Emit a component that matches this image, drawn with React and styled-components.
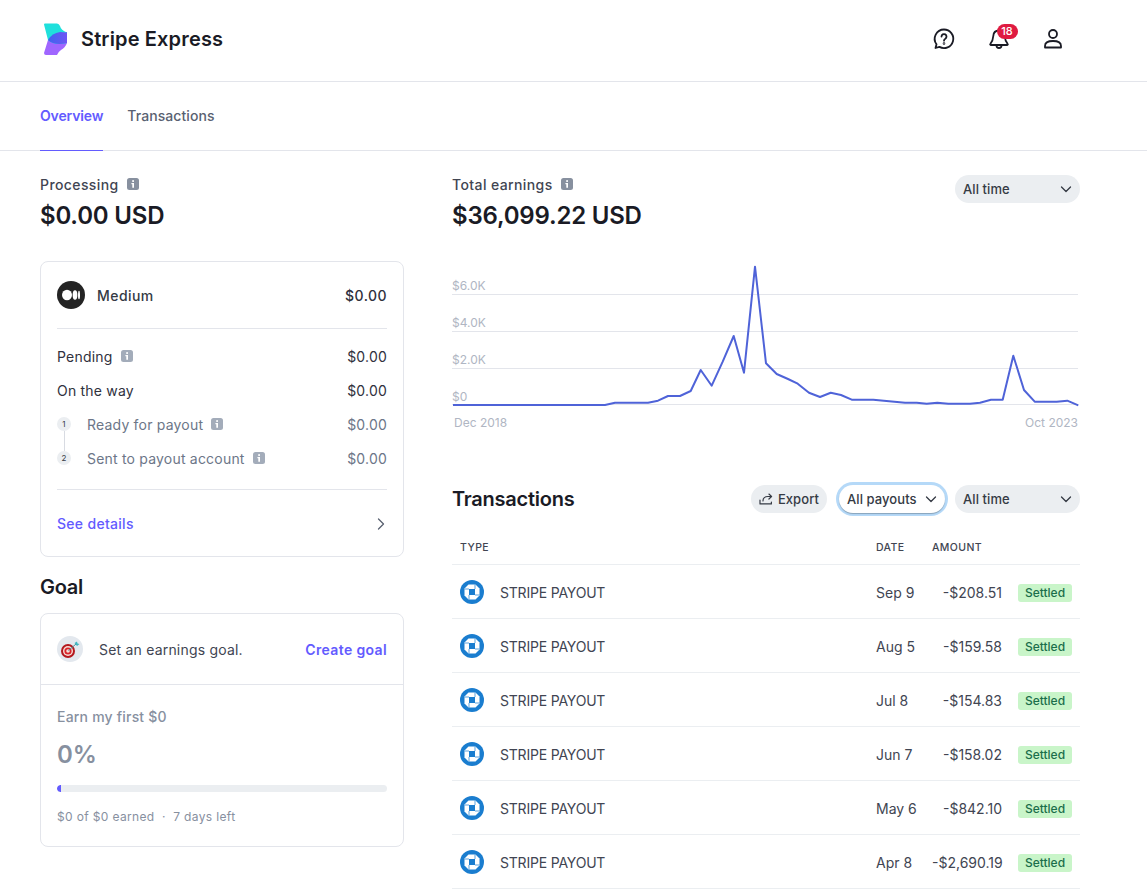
import React from 'react';
import styled, {createGlobalStyle} from 'styled-components';

const GlobalStyle = createGlobalStyle`
  html, body {
    margin: 0;
    padding: 0;
    background: #fff;
    font-family: Inter, "Liberation Sans", sans-serif;
    color: #30313d;
    -webkit-font-smoothing: antialiased;
  }
  * {
    box-sizing: border-box;
  }
`

const Header = styled.header`
  height: 82px;
  padding: 0 67px 3px 40px;
  display: flex;
  align-items: center;
  justify-content: space-between;
  border-bottom: 1px solid #e3e5eb;
`
const Brand = styled.div`
  display: flex;
  align-items: center;
  gap: 14px;
  padding-left: 4px;
  font-size: 20px;
  font-weight: 600;
  letter-spacing: 0.15px;
  color: #1a1b25;
`
const IconBar = styled.div`
  display: flex;
  align-items: center;
  gap: 30.5px;
  padding-right: 15px;
`
const IconButton = styled.div`
  position: relative;
  width: 24px;
  height: 24px;
  color: #1a1b25;
`
const Badge = styled.span`
  position: absolute;
  top: -3px;
  left: 10px;
  width: 21px;
  height: 15px;
  border-radius: 8px;
  background: #df1b41;
  color: #fff;
  font-size: 11px;
  font-weight: 500;
  line-height: 15px;
  text-align: center;
`
const Tabs = styled.nav`
  height: 69px;
  padding-left: 40px;
  display: flex;
  gap: 24px;
  border-bottom: 1px solid #e3e5eb;
`
const Tab = styled.div`
  height: 69px;
  display: flex;
  align-items: center;
  padding-bottom: 2px;
  font-size: 14px;
  font-weight: ${({$active}) => $active ? 600 : 500};
  letter-spacing: ${({$active}) => $active ? '-0.15px' : '0.08px'};
  color: ${({$active}) => $active ? '#635bff' : '#596171'};
  border-bottom: ${({$active}) => $active ? '1px solid #635bff' : 'none'};
`
const Main = styled.main`
  display: grid;
  grid-template-columns: 364px 628px;
  gap: 48px;
  padding: 23px 67px 0 40px;
`
const Column = styled.section`
  display: flex;
  flex-direction: column;
`
const SummaryRow = styled.div`
  display: flex;
  justify-content: space-between;
  align-items: flex-start;
`
const Label = styled.div`
  display: flex;
  align-items: center;
  gap: 8px;
  height: 20px;
  font-size: 14px;
  font-weight: 500;
  letter-spacing: 0.4px;
  color: #414552;
`
const Amount = styled.div`
  margin-top: 6px;
  font-size: 24px;
  line-height: 32px;
  font-weight: 600;
  letter-spacing: -0.2px;
  color: #1a1b25;
`
const Card = styled.div`
  border: 1px solid #e3e5eb;
  border-radius: 8px;
  margin-top: ${({$top}) => $top || 0}px;
`
const AccountHead = styled.div`
  height: 67px;
  margin: 0 16px;
  display: flex;
  align-items: center;
  gap: 12px;
  border-bottom: 1px solid #e3e5eb;
`
const AccountName = styled.span`
  flex: 1;
  font-size: 14px;
  font-weight: 500;
  letter-spacing: 0.45px;
  color: #353a44;
`
const AccountTotal = styled.span`
  font-size: 14px;
  font-weight: 500;
  letter-spacing: 0.45px;
  color: #30313d;
`
const Rows = styled.div`
  margin: 0 16px;
  padding: 10px 0 14px;
  border-bottom: 1px solid #e3e5eb;
`
const Row = styled.div`
  position: relative;
  height: 34px;
  display: flex;
  align-items: center;
  justify-content: space-between;
  font-size: 14px;
  letter-spacing: 0.2px;
  color: ${({$muted}) => $muted ? '#6c7688' : '#30313d'};
  padding-left: ${({$muted}) => $muted ? 30 : 0}px;
`
const RowLabel = styled.span`
  display: flex;
  align-items: center;
  gap: 8px;
`
const Step = styled.span`
  position: absolute;
  left: 0;
  top: 10px;
  width: 14px;
  height: 14px;
  border-radius: 50%;
  background: #ebeef1;
  color: #353a44;
  font-size: 8px;
  line-height: 14px;
  letter-spacing: 0;
  text-align: center;
`
const StepLine = styled.span`
  position: absolute;
  left: 7px;
  top: 24px;
  width: 1px;
  height: 20px;
  background: #d8dbe2;
`
const DetailsLink = styled.div`
  height: 66px;
  margin: 0 16px;
  padding-top: 1px;
  display: flex;
  align-items: center;
  justify-content: space-between;
  font-size: 14px;
  font-weight: 500;
  letter-spacing: 0.3px;
  color: #635bff;
`
const Heading = styled.h2`
  margin: ${({$top}) => $top || 0}px 0 0;
  font-size: 20px;
  line-height: 28px;
  font-weight: 600;
  letter-spacing: -0.25px;
  color: #1a1b25;
`
const GoalHead = styled.div`
  height: 71px;
  padding: 0 16px;
  display: flex;
  align-items: center;
  gap: 16px;
  border-bottom: 1px solid #e3e5eb;
  font-size: 14px;
  letter-spacing: 0.2px;
  color: #414552;
`
const GoalText = styled.span`
  flex: 1;
`
const GoalLink = styled.span`
  font-weight: 600;
  letter-spacing: 0.36px;
  color: #635bff;
`
const IconDisc = styled.div`
  width: 26px;
  height: 26px;
  border-radius: 50%;
  background: #e3e8ee;
  display: flex;
  align-items: center;
  justify-content: center;
`
const GoalBody = styled.div`
  padding: 22px 16px 20px;
`
const GoalTitle = styled.div`
  font-size: 14px;
  line-height: 20px;
  font-weight: 500;
  letter-spacing: 0.2px;
  color: #87909f;
`
const GoalPercent = styled.div`
  margin-top: 12px;
  font-size: 24px;
  line-height: 32px;
  font-weight: 600;
  color: #87909f;
`
const Track = styled.div`
  margin-top: 14px;
  height: 7px;
  border-radius: 4px;
  background: #ebeef1;
  overflow: hidden;
`
const Fill = styled.div`
  height: 100%;
  background: #635bff;
  border-radius: 4px 0 0 4px;
`
const GoalMeta = styled.div`
  margin-top: 16px;
  font-size: 12px;
  line-height: 18px;
  letter-spacing: 0.35px;
  color: #87909f;
`
const Select = styled.div`
  width: ${({$width}) => $width}px;
  height: 28px;
  padding: 0 8px;
  border-radius: 14px;
  background: #ebeef1;
  display: flex;
  align-items: center;
  justify-content: space-between;
  font-size: 13px;
  font-weight: 500;
  letter-spacing: 0.08px;
  color: #353a44;
`
const PeriodSelect = styled(Select)`
  margin-top: 1px;
`
const FocusSelect = styled(Select)`
  background: #fff;
  box-shadow: 0 1px 1px rgba(0, 0, 0, .25), 0 0 0 3px #b5d9f8;
`
const ExportButton = styled(Select)`
  justify-content: center;
  gap: 5px;
  margin-right: 2px;
`
const ChartBox = styled.svg`
  display: block;
  margin-top: 23px;
  width: 628px;
  height: 180px;
`
const TxHead = styled.div`
  margin-top: 50px;
  display: flex;
  align-items: center;
  gap: 10px;
`
const TxTitle = styled(Heading)`
  flex: 1;
`
const Table = styled.table`
  width: 628px;
  margin-top: 17px;
  border-collapse: collapse;
  table-layout: fixed;
`
const Th = styled.th`
  height: 34px;
  padding: 1px 8px 0;
  border-bottom: 1px solid #ebeef1;
  font-size: 10.5px;
  font-weight: 500;
  letter-spacing: 0.4px;
  text-align: left;
  color: #414552;
`
const Td = styled.td`
  height: 54px;
  padding: 2px 8px 0;
  border-bottom: 1px solid #ebeef1;
  font-size: 14px;
  color: #414552;
  text-align: ${({$right}) => $right ? 'right' : 'left'};
  white-space: nowrap;
`
const Payout = styled.div`
  display: flex;
  align-items: center;
  gap: 16px;
  letter-spacing: -0.2px;
`
const Settled = styled.span`
  display: inline-block;
  width: 54px;
  height: 18px;
  border-radius: 3px;
  background: #c9f5c9;
  color: #1b6e4b;
  font-size: 12px;
  font-weight: 500;
  line-height: 18px;
  text-align: center;
`

const Logo = () => (
    <svg width="23" height="32" viewBox="0 0 23 32">
        <defs>
            <linearGradient id="overlap" x1="0" y1="0.5" x2="1" y2="0.5">
                <stop offset="0" stopColor="#3f63ee"/>
                <stop offset="1" stopColor="#6f55f5"/>
            </linearGradient>
        </defs>
        <path d="M23 9V20Q21 25 17 27Q14 29 13 32H2Q0 32 0 30L4 17Q7 9 16 9Z" fill="#a066ff"/>
        <path d="M0 1.500Q0 .5 1 .5H13Q15 .5 16 3Q17 7 23 9.500V20C15 22 8 21 4 17Z" fill="#1fe0dc"/>
        <path d="M4 17Q8 10 16 9L23 9.500V20C15 22 8 21 4 17Z" fill="url(#overlap)"/>
    </svg>
)

const HelpIcon = () => (
    <svg width="24" height="24" viewBox="0 0 24 24" fill="none" stroke="currentColor" strokeWidth="1.8" strokeLinecap="round" strokeLinejoin="round">
        <path d="M12 2.500a9.300 9.300 0 1 1-4.600 17.400L3.500 21l1-3.700A9.300 9.300 0 0 1 12 2.500Z"/>
        <path d="M9.500 9.500a2.500 2.500 0 1 1 3.800 2.200c-.9.500-1.300 1-1.300 2"/>
        <circle cx="12" cy="16.500" r=".4"/>
    </svg>
)

const BellIcon = () => (
    <svg width="24" height="24" viewBox="0 0 24 24" fill="none" stroke="currentColor" strokeWidth="1.8" strokeLinecap="round" strokeLinejoin="round">
        <path d="M12 3.500c-3.500 0-5.500 2.500-5.700 5.500-.2 3.500-1 5.500-3 8a.6.6 0 0 0 .5 1h16.400a.6.6 0 0 0 .5-1c-2-2.500-2.800-4.500-3-8C17.500 6 15.500 3.500 12 3.500Z"/>
        <path d="M9.500 18.500a2.500 2.500 0 0 0 5 0"/>
    </svg>
)

const UserIcon = () => (
    <svg width="24" height="24" viewBox="0 0 24 24" fill="none" stroke="currentColor" strokeWidth="1.8" strokeLinecap="round" strokeLinejoin="round">
        <circle cx="12" cy="7" r="4"/>
        <path d="M4 20.500v-1.500c0-3 3-5 8-5s8 2 8 5v1.500Z"/>
    </svg>
)

const InfoIcon = ({color = '#87909f'}) => (
    <svg width="12" height="12" viewBox="0 0 12 12">
        <rect width="12" height="12" rx="2.500" fill={color}/>
        <rect x="5.200" y="2.200" width="1.800" height="1.700" fill="#fff"/>
        <path d="M4.400 5h2.600v4.700H5.300V6.200h-.9Z" fill="#fff"/>
    </svg>
)

const MediumLogo = () => (
    <svg width="28" height="28" viewBox="0 0 28 28">
        <circle cx="14" cy="14" r="14" fill="#242424"/>
        <ellipse cx="10" cy="14" rx="5" ry="5.200" fill="#fff"/>
        <ellipse cx="18" cy="14" rx="2.400" ry="4.800" fill="#fff"/>
        <ellipse cx="22" cy="14" rx="1" ry="4.300" fill="#fff"/>
    </svg>
)

const TargetIcon = () => (
    <svg width="20" height="20" viewBox="0 0 20 20">
        <circle cx="8" cy="12" r="7" fill="#b3171d"/>
        <circle cx="8" cy="12" r="5" fill="#f6dcd6"/>
        <circle cx="8" cy="12" r="3.600" fill="#d9232a"/>
        <circle cx="8" cy="12" r="1.800" fill="#f6dcd6"/>
        <path d="M8.500 11.500L16 5" stroke="#4a8f96" strokeWidth="1"/>
        <path d="M14.500 4l2.500-1.500 .5 2 2 .5-2.500 2Z" fill="#3fb6c0"/>
    </svg>
)

const ChevronDown = () => (
    <svg width="12" height="12" viewBox="0 0 12 12" fill="none" stroke="#353a44" strokeWidth="1.300" strokeLinecap="round" strokeLinejoin="round">
        <path d="M1.500 4l4.500 4.500L10.500 4"/>
    </svg>
)

const ChevronRight = () => (
    <svg width="12" height="12" viewBox="0 0 12 12" fill="none" stroke="#596171" strokeWidth="1.300" strokeLinecap="round" strokeLinejoin="round">
        <path d="M3.500 1l5 5-5 5"/>
    </svg>
)

const ExportIcon = () => (
    <svg width="14" height="14" viewBox="0 0 14 14" fill="none" stroke="#353a44" strokeWidth="1.200" strokeLinecap="round" strokeLinejoin="round">
        <path d="M1 8v4h11.500V10"/>
        <path d="M4 9c0-3 2-4.500 5-4.500h3.500"/>
        <path d="M10 2l2.700 2.500L10 7"/>
    </svg>
)

const BankLogo = () => (
    <svg width="24" height="24" viewBox="0 0 24 24">
        <circle cx="12" cy="12" r="12" fill="#1a7dcf"/>
        <path d="M8.500 4.500H15.500L19.500 8.500V15.500L15.500 19.500H8.500L4.500 15.500V8.500Z" fill="#fff"/>
        <rect x="9" y="9" width="6" height="6" fill="#1a7dcf"/>
        <path d="M15 9V4.500M15 15H19.500M9 15V19.500M9 9H4.500" stroke="#1a7dcf" strokeWidth=".7"/>
    </svg>
)

const chartPoints = [
    [1, 150], [153, 150], [163, 147.700], [196, 147.700], [206, 145.700], [216, 141], [228, 141], [238.700, 136],
    [248.700, 115], [259.700, 130.700], [270.700, 106.700], [281.700, 81], [292, 117.700], [303, 11.700], [314, 108.300],
    [324.700, 119], [336, 124], [345.700, 128.700], [357, 137.700], [368, 142], [378.700, 137.700], [389, 140],
    [399.700, 144.700], [421.300, 144.700], [453, 147.700], [464.700, 147.700], [474.700, 148.700], [485.300, 147.700],
    [496.300, 148.700], [518, 148.700], [528, 147.700], [539, 144.700], [550.700, 144.700], [561.300, 100.700],
    [572, 135], [582.700, 146.700], [604.700, 146.700], [615.300, 145.700], [626.300, 150.300],
]

const gridLines = [
    {label: '$6.0K', y: 39.500, lift: 5},
    {label: '$4.0K', y: 76.500, lift: 5},
    {label: '$2.0K', y: 113.500, lift: 5},
    {label: '$0', y: 149.500, lift: 4},
]

const Chart = () => (
    <ChartBox viewBox="0 0 628 180">
        {gridLines.map(({label, y, lift}) => (
            <g key={label}>
                <text x="0" y={y - lift} fontSize="12" fill="#b0b6c3" fontFamily="Inter, sans-serif">{label}</text>
                <line x1="0" x2="626" y1={y} y2={y} stroke="#e3e5eb" strokeWidth="1"/>
            </g>
        ))}
        <polyline points={chartPoints.map(p => p.join(',')).join(' ')} fill="none" stroke="#4f63d8" strokeWidth="2" strokeLinejoin="round"/>
        <text x="2" y="172" fontSize="12" fill="#b0b6c3" fontFamily="Inter, sans-serif">Dec 2018</text>
        <text x="626" y="172" fontSize="12" fill="#b0b6c3" textAnchor="end" fontFamily="Inter, sans-serif">Oct 2023</text>
    </ChartBox>
)

const transactions = [
    {date: 'Sep 9', amount: '-$208.51'},
    {date: 'Aug 5', amount: '-$159.58'},
    {date: 'Jul 8', amount: '-$154.83'},
    {date: 'Jun 7', amount: '-$158.02'},
    {date: 'May 6', amount: '-$842.10'},
    {date: 'Apr 8', amount: '-$2,690.19'},
]

const App = () => {
    return (
        <>
            <GlobalStyle/>
            <Header>
                <Brand><Logo/>Stripe Express</Brand>
                <IconBar>
                    <IconButton><HelpIcon/></IconButton>
                    <IconButton><BellIcon/><Badge>18</Badge></IconButton>
                    <IconButton><UserIcon/></IconButton>
                </IconBar>
            </Header>
            <Tabs>
                <Tab $active>Overview</Tab>
                <Tab>Transactions</Tab>
            </Tabs>
            <Main>
                <Column>
                    <Label>Processing <InfoIcon/></Label>
                    <Amount>$0.00 USD</Amount>
                    <Card $top={29}>
                        <AccountHead>
                            <MediumLogo/>
                            <AccountName>Medium</AccountName>
                            <AccountTotal>$0.00</AccountTotal>
                        </AccountHead>
                        <Rows>
                            <Row><RowLabel>Pending <InfoIcon color="#a3acba"/></RowLabel><span>$0.00</span></Row>
                            <Row><RowLabel>On the way</RowLabel><span>$0.00</span></Row>
                            <Row $muted>
                                <Step>1</Step><StepLine/>
                                <RowLabel>Ready for payout <InfoIcon color="#a3acba"/></RowLabel><span>$0.00</span>
                            </Row>
                            <Row $muted>
                                <Step>2</Step>
                                <RowLabel>Sent to payout account <InfoIcon color="#a3acba"/></RowLabel><span>$0.00</span>
                            </Row>
                        </Rows>
                        <DetailsLink>See details <ChevronRight/></DetailsLink>
                    </Card>
                    <Heading $top={16}>Goal</Heading>
                    <Card $top={12}>
                        <GoalHead>
                            <IconDisc><TargetIcon/></IconDisc>
                            <GoalText>Set an earnings goal.</GoalText>
                            <GoalLink>Create goal</GoalLink>
                        </GoalHead>
                        <GoalBody>
                            <GoalTitle>Earn my first $0</GoalTitle>
                            <GoalPercent>0%</GoalPercent>
                            <Track><Fill style={{width: '1.200%'}}/></Track>
                            <GoalMeta>$0 of $0 earned &nbsp;·&nbsp; 7 days left</GoalMeta>
                        </GoalBody>
                    </Card>
                </Column>
                <Column>
                    <SummaryRow>
                        <div>
                            <Label>Total earnings <InfoIcon/></Label>
                            <Amount>$36,099.22 USD</Amount>
                        </div>
                        <PeriodSelect $width={125}>All time <ChevronDown/></PeriodSelect>
                    </SummaryRow>
                    <Chart/>
                    <TxHead>
                        <TxTitle>Transactions</TxTitle>
                        <ExportButton $width={76}><ExportIcon/>Export</ExportButton>
                        <FocusSelect $width={106}>All payouts <ChevronDown/></FocusSelect>
                        <Select $width={125}>All time <ChevronDown/></Select>
                    </TxHead>
                    <Table>
                        <colgroup>
                            <col width="416"/>
                            <col width="56"/>
                            <col width="86"/>
                            <col width="70"/>
                        </colgroup>
                        <thead>
                            <tr>
                                <Th>TYPE</Th>
                                <Th>DATE</Th>
                                <Th>AMOUNT</Th>
                                <Th/>
                            </tr>
                        </thead>
                        <tbody>
                            {transactions.map(tx => (
                                <tr key={tx.date}>
                                    <Td><Payout><BankLogo/>STRIPE PAYOUT</Payout></Td>
                                    <Td>{tx.date}</Td>
                                    <Td $right>{tx.amount}</Td>
                                    <Td><Settled>Settled</Settled></Td>
                                </tr>
                            ))}
                        </tbody>
                    </Table>
                </Column>
            </Main>
        </>
    );
};

export default App;
